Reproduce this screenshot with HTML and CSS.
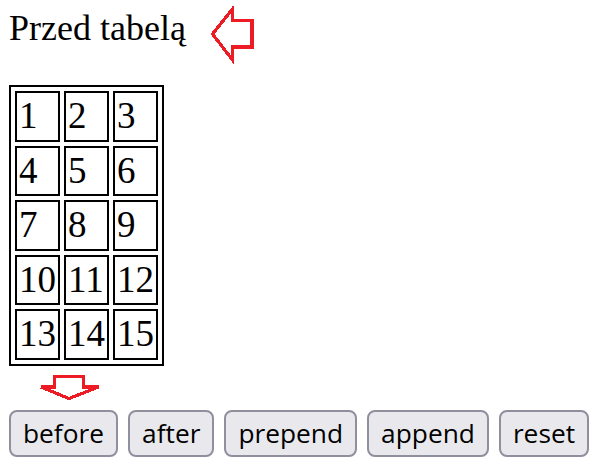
FILE: index.html
```html
<!DOCTYPE html>
<html lang="pl">
<head>
<meta charset="utf-8">
<title>Przed tabelą</title>
<link rel="stylesheet" href="styles.css">
</head>
<body>
<div class="page">
  <div class="top">
    <span class="title">Przed tabelą</span>
    <svg class="arrow-left" width="48" height="58" viewBox="207 6 48 58" aria-hidden="true">
      <polygon points="211.5,34 231.5,9 231.5,20.5 251,20.5 251,47 231.5,47 231.5,60" fill="none" stroke="#ed1c24" stroke-width="3.2" stroke-linejoin="miter" shape-rendering="crispEdges"/>
    </svg>
  </div>
  <table class="grid">
    <tr><td>1</td><td>2</td><td>3</td></tr>
    <tr><td>4</td><td>5</td><td>6</td></tr>
    <tr><td>7</td><td>8</td><td>9</td></tr>
    <tr><td>10</td><td>11</td><td>12</td></tr>
    <tr><td>13</td><td>14</td><td>15</td></tr>
  </table>
  <svg class="arrow-down" width="66" height="30" viewBox="37 373 66 30" aria-hidden="true">
    <polygon points="54.7,376.7 83.7,376.7 83.7,387 98.5,387 69,398.5 41,387 54.7,387" fill="none" stroke="#ed1c24" stroke-width="3.2" stroke-linejoin="miter" shape-rendering="crispEdges"/>
  </svg>
  <div class="buttons">
    <button class="btn">before</button>
    <button class="btn">after</button>
    <button class="btn">prepend</button>
    <button class="btn">append</button>
    <button class="btn">reset</button>
  </div>
</div>
</body>
</html>
```

FILE: styles.css
```css
html, body {
  margin: 0;
  background: #ffffff;
}

.page {
  padding: 7px 9px;
  font-family: "Liberation Serif", "Times New Roman", serif;
  font-size: 37px;
  color: #000000;
}

.top {
  display: flex;
  align-items: flex-start;
}

.title {
  font-size: 36px;
  line-height: 42px;
  white-space: nowrap;
}

.arrow-left {
  display: block;
  margin-left: 22px;
  margin-top: -1px;
}

.grid {
  margin-top: 21px;
  border: 2px solid #000000;
  border-collapse: separate;
  border-spacing: 4px;
}

.grid td {
  border: 2px solid #000000;
  padding: 2px;
  width: 37px;
  font-size: 37px;
  line-height: 42.5px;
  text-align: left;
  vertical-align: middle;
}

.arrow-down {
  display: block;
  margin-left: 28px;
  margin-top: 7px;
}

.buttons {
  display: flex;
  gap: 10px;
  margin-top: 7px;
}

.btn {
  font-family: "Open Sans", "Noto Sans", sans-serif;
  font-size: 26.3px;
  line-height: 35px;
  padding: 4px 12px;
  border: 2px solid #8f8f9d;
  border-radius: 8px;
  background: #e9e9ed;
  color: #000000;
}
```
